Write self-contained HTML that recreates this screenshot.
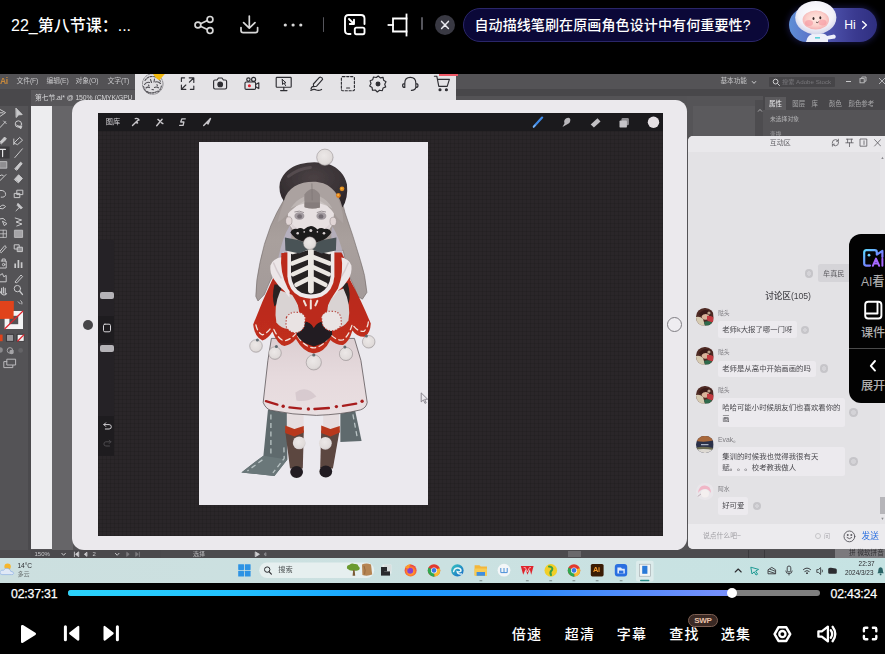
<!DOCTYPE html>
<html lang="zh-CN">
<head>
<meta charset="utf-8">
<title>22_第八节课</title>
<style>
*{box-sizing:border-box;margin:0;padding:0}
html,body{width:885px;height:654px;overflow:hidden;background:#000}
body{font-family:"Liberation Sans","Noto Sans CJK SC",sans-serif;color:#fff;position:relative}
.abs{position:absolute}
#top{position:absolute;left:0;top:0;width:885px;height:74px;background:#000}
#title{position:absolute;left:11px;top:13px;font-size:17px;line-height:24px;white-space:nowrap;color:#fff}
#video{position:absolute;left:0;top:74px;width:885px;height:509px;background:#535353;overflow:hidden}
#bottom{position:absolute;left:0;top:583px;width:885px;height:71px;background:#000}

#title{left:11px;top:14px;font-size:16px;line-height:24px;letter-spacing:0}
.ico{position:absolute;overflow:visible}
.sep{position:absolute;width:1.4px;background:#55555c;border-radius:1px}
#closebtn{position:absolute;left:435px;top:15.3px;width:20px;height:20px;border-radius:50%;background:#393943}
#qpill{position:absolute;left:463px;top:8px;width:306px;height:34px;border-radius:17px;background:#0b0838;border:1px solid #2a2668;color:#fff;font-size:14px;line-height:32px;padding-left:10.400px;white-space:nowrap;letter-spacing:.12px}
#hipill{position:absolute;left:789px;top:8px;width:88px;height:34px;border-radius:17px;background:linear-gradient(90deg,#5f8fd6 0%,#5a72c8 25%,#4b4fa8 50%,#3a3a90 75%,#2f2f80 100%);box-shadow:0 0 6px 1px rgba(40,40,120,.55)}
#hitxt{position:absolute;left:844.300px;top:14.400px;font-size:12.200px;line-height:22px;color:#fff;white-space:nowrap}

#title,#qpill{font-weight:500}
#video{background:#545356}
#vp{position:absolute;left:0;top:-74px;width:885px;height:654px}
#vp div,#vp svg,#vp span{position:absolute}
.r{position:absolute}
.t{white-space:nowrap;line-height:1;font-weight:400}
#aimenu{left:0;top:74px;width:885px;height:15px;background:#535255}
#aitab{left:0;top:89px;width:456px;height:17px;background:#49484b}
#aidoc{left:31px;top:89.600px;width:104px;height:16px;background:#58575a}
#wtb{left:135px;top:74px;width:321px;height:26px;background:#e4e3e6}
#toolp{left:0;top:105.500px;width:30.600px;height:444.500px;background:#545356}
#lstrip{left:30.800px;top:105.500px;width:21.200px;height:443.500px;background:#ededef}
#gstrip{left:52px;top:105.500px;width:21px;height:444.500px;background:#666568}
#ipad{left:72px;top:99.600px;width:615.400px;height:450px;background:#ebe9ed;border-radius:13px 11.500px 11.500px 12px}
#scr{left:98.100px;top:113px;width:564.700px;height:422.600px;background:#2a2629;overflow:hidden}
#scrgrid{left:0;top:18px;width:565px;height:405px;background-image:linear-gradient(rgba(0,0,0,.09) 1px,transparent 1px),linear-gradient(90deg,rgba(0,0,0,.09) 1px,transparent 1px);background-size:4px 4px}
#pctop{left:0;top:0;width:565px;height:18px;background:#1b1a1d}
#canvas{left:198.600px;top:141.600px;width:229.600px;height:363.400px;background:#ebe9ee}
#status{left:0;top:549.500px;width:885px;height:8.500px;background:#4c4b4e}
#taskbar{left:0;top:558px;width:885px;height:25px;background:linear-gradient(90deg,#ccdfdf 0%,#cbe1e1 50%,#c6e3e3 100%)}
#chat{left:688.400px;top:136px;width:200px;height:412.500px;background:#e3e2e5;border-radius:5px 0 0 5px;overflow:hidden}

#bottom div,#bottom svg{position:absolute}
.tm{font-size:12.300px;line-height:14px;color:#fff;white-space:nowrap;letter-spacing:-0.2px;-webkit-text-stroke:.25px #fff}
#pbar{left:67.800px;top:7.200px;width:752.400px;height:5.800px;border-radius:3px;background:#7f7f7f}
#pfill{left:67.800px;top:7.200px;width:666px;height:5.800px;border-radius:3px;background:linear-gradient(90deg,#2bd3fb 0%,#22c2ff 25%,#189dff 50%,#2d8cfb 70%,#5c8cfb 88%,#7a90fb 100%)}
#pknob{left:726.800px;top:5px;width:10.400px;height:10.400px;border-radius:50%;background:#fff}
.cl{font-size:14px;line-height:20px;color:#fff;white-space:nowrap;font-weight:500;top:40.900px;letter-spacing:1.400px;margin-left:-.3px}
#swp{left:687.700px;top:30.900px;width:30.600px;height:13px;border-radius:6.500px;background:#3a2924;border:1px solid #7d5f52;color:#e9c3ab;font-size:8px;line-height:11px;text-align:center;font-weight:700;letter-spacing:-.3px}
#float{position:absolute;left:848.800px;top:233.500px;width:40px;height:169px;background:#020202;border-radius:12px 0 0 12px}
#float div,#float svg{position:absolute}
.fl{font-size:12.200px;line-height:16px;color:#adadad;white-space:nowrap;left:12.200px;font-weight:500;letter-spacing:-.1px}

.mt{font-size:6.800px;color:#c6c6c8;top:77.500px;letter-spacing:-.1px}
.bl{filter:blur(.35px)}
.pt{font-size:6.400px;color:#c4c4c6}

.st{font-size:6px;color:#c9c9cb;top:551px}
.tk{top:563.800px;width:13px;height:13px}
#chat div,#chat svg{position:absolute}
.cn{font-size:5.800px;color:#7d7c80;left:29.600px}
.cb{left:30px;background:#eceaee;border-radius:2.500px}
.cx{font-size:7.400px;line-height:11.200px;color:#4b4a4f;left:33.800px;white-space:nowrap;letter-spacing:0;text-spacing-trim:space-all}
.ci{width:8.400px;height:8.400px;border-radius:50%;background:radial-gradient(circle,#d4d3d7 0 35%,#c6c5c9 36% 100%)}
.av{left:7.800px;width:17.400px;height:17.400px;border-radius:50%;overflow:hidden}
/*SECTION-CSS*/
</style>
</head>
<body>
<div id="top">
  <div id="title">22_第八节课：...</div>
  
  <svg class="ico" style="left:193px;top:14px" width="22" height="22" viewBox="0 0 22 22" fill="none" stroke="#d8d8d8" stroke-width="1.7">
    <circle cx="4.9" cy="11" r="2.9"/><circle cx="17" cy="5.4" r="2.9"/><circle cx="17" cy="16.6" r="2.9"/>
    <path d="M7.5 9.8 L14.4 6.6 M7.5 12.2 L14.4 15.4"/>
  </svg>
  <svg class="ico" style="left:238px;top:13px" width="22" height="22" viewBox="0 0 22 22" fill="none" stroke="#d8d8d8" stroke-width="1.7" stroke-linecap="round" stroke-linejoin="round">
    <path d="M11.3 3 V15 M5.6 9.6 L11.3 15.2 L17 9.6"/>
    <path d="M3 14.5 V17.5 Q3 19.6 5.2 19.6 H17.4 Q19.6 19.6 19.6 17.5 V14.5"/>
  </svg>
  <svg class="ico" style="left:282px;top:20px" width="22" height="10" viewBox="0 0 22 10" fill="#d8d8d8">
    <circle cx="3.3" cy="5" r="1.6"/><circle cx="11.1" cy="5" r="1.6"/><circle cx="18.8" cy="5" r="1.6"/>
  </svg>
  <div class="sep" style="left:323px;top:17px;height:15px"></div>
  <svg class="ico" style="left:343px;top:13px" width="24" height="24" viewBox="0 0 24 24" fill="none" stroke="#fff" stroke-width="1.9" stroke-linecap="round" stroke-linejoin="round">
    <path d="M7.5 21 H5.5 Q2 21 2 17.5 V5.5 Q2 2 5.500 2 H18 Q21.5 2 21.5 5.500 V11"/>
    <rect x="11.8" y="14.6" width="9.7" height="6.6" rx="1.6"/>
    <path d="M6 6 L11 11 M11 6.800 V11 H6.800"/>
  </svg>
  <svg class="ico" style="left:386px;top:12px" width="24" height="26" viewBox="0 0 24 26" fill="none" stroke="#fff" stroke-width="1.8" stroke-linecap="square">
    <path d="M20.500 2.500 V23.500"/>
    <path d="M20.500 6.500 H7 V19.500 H20.500"/>
    <path d="M2.500 13 H7"/>
  </svg>
  <div class="sep" style="left:421.3px;top:16.5px;height:13.5px"></div>
  <div id="closebtn"><svg width="20" height="20" viewBox="0 0 20 20" fill="none" stroke="#e8e8ee" stroke-width="1.5" stroke-linecap="round"><path d="M6.600 6.400 L13.400 13.400 M13.400 6.400 L6.600 13.400"/></svg></div>
  <div id="qpill">自动描线笔刷在原画角色设计中有何重要性?</div>
  <div id="hipill"></div>
  <svg class="ico" style="left:786px;top:0" width="60" height="44" viewBox="0 0 60 44">
    <defs>
      <radialGradient id="hg" cx="50%" cy="40%" r="60%"><stop offset="0" stop-color="#ffffff"/><stop offset="0.7" stop-color="#f2f1f8"/><stop offset="1" stop-color="#d4d6ea"/></radialGradient>
      <radialGradient id="fg" cx="50%" cy="45%" r="60%"><stop offset="0" stop-color="#ffe9e2"/><stop offset="0.6" stop-color="#fbd0cb"/><stop offset="1" stop-color="#f3a9ad"/></radialGradient>
      <clipPath id="hc"><rect x="3" y="0" width="57" height="42" rx="17"/></clipPath>
    </defs>
    <g clip-path="url(#hc)">
      <path d="M20 42 Q21 34 30 33 Q40 33 41 36 L48 34.500 Q51 36 49 38.500 L42 39.500 L42 42 Z" fill="#eef0fa"/>
      <rect x="29" y="37" width="5" height="1.600" fill="#5fd0d8"/>
      <ellipse cx="29.800" cy="17.600" rx="20.600" ry="16.600" fill="url(#hg)"/>
      <ellipse cx="29.800" cy="20" rx="13.200" ry="9.400" fill="url(#fg)"/>
      <ellipse cx="23" cy="23" rx="4" ry="3" fill="#f58f9a" opacity=".55"/>
      <ellipse cx="36.500" cy="22.500" rx="4" ry="3" fill="#f58f9a" opacity=".55"/>
      <ellipse cx="27.500" cy="18.400" rx="1" ry="1.500" fill="#3a2a2a"/>
      <ellipse cx="34.300" cy="17.800" rx="1" ry="1.500" fill="#3a2a2a"/>
      <path d="M30 22 Q31.200 23.500 32.600 21.800" stroke="#3a2a2a" stroke-width=".8" fill="none"/>
    </g>
  </svg>
  <div id="hitxt">Hi</div>
  <svg class="ico" style="left:859px;top:18px" width="10" height="14" viewBox="0 0 10 14" fill="none" stroke="#fff" stroke-width="1.400" stroke-linecap="round" stroke-linejoin="round"><path d="M3.600 3.600 L7.400 7.100 L3.600 10.600"/></svg>
<!--TOP-ICONS-->
</div>
<div id="video">
  
<div id="vp">
  <div id="aimenu"></div>
  <div id="aitab"></div>
  <div id="aidoc"></div>
  
  <div class="t bl" style="left:0;top:77px;font-size:8.500px;font-weight:700;color:#c98a3c;letter-spacing:-.5px">Ai</div>
  <div class="t mt bl" style="left:16.500px">文件(F)</div>
  <div class="t mt bl" style="left:46.500px">编辑(E)</div>
  <div class="t mt bl" style="left:75.500px">对象(O)</div>
  <div class="t mt bl" style="left:107.500px">文字(T)</div>
  <div class="t bl" style="left:35px;top:94.600px;font-size:6.800px;color:#d6d6d8;letter-spacing:-.05px">第七节.ai* @ 150% (CMYK/GPU</div>
  <div style="left:456px;top:74px;width:429px;height:15.300px;background:#545356"></div>
  <div style="left:456px;top:89.300px;width:429px;height:7px;background:#48474a"></div>
  <div class="t bl" style="left:720.500px;top:77.800px;font-size:6.600px;color:#c4c4c6">基本功能</div>
  <svg class="bl" style="left:750.500px;top:79.500px" width="6" height="5" viewBox="0 0 6 5" fill="none" stroke="#cfcfd1" stroke-width="1"><path d="M1 1.200 L3 3.400 L5 1.200"/></svg>
  <div style="left:769px;top:76.500px;width:65.500px;height:10.500px;background:#464548;border-radius:1px"></div>
  <svg class="bl" style="left:771.500px;top:77.500px" width="9" height="9" viewBox="0 0 9 9" fill="none" stroke="#d0d0d2" stroke-width="1"><circle cx="3.600" cy="3.600" r="2.400"/><path d="M5.400 5.400 L7.800 7.800"/></svg>
  <div class="t bl" style="left:782px;top:78.500px;font-size:6.200px;color:#77767a">搜索 Adobe Stock</div>
  <div style="left:845.500px;top:81px;width:5.500px;height:1px;background:#c8c8ca"></div>
  <svg class="bl" style="left:859px;top:76px" width="8" height="8" viewBox="0 0 8 8" fill="none" stroke="#c0c0c2" stroke-width=".9"><rect x="1" y="2.600" width="4.200" height="4.200"/><path d="M2.800 2.600 V1 H7 V5.200 H5.200"/></svg>
  <svg class="bl" style="left:878px;top:77px" width="8" height="8" viewBox="0 0 8 8" fill="none" stroke="#c0c0c2" stroke-width=".9"><path d="M1 1 L7 7 M7 1 L1 7"/></svg>

  <div id="wtb"></div>
  
  <svg style="left:135px;top:74px" width="321" height="26" viewBox="135 74 321 26" fill="none" stroke="#2e2e33" stroke-width="1.150" stroke-linecap="round" stroke-linejoin="round" class="bl">
    <circle cx="152.700" cy="84" r="10.300" fill="#dedde0" stroke="#77767b" stroke-width=".8" stroke-dasharray="2.400 1.200"/>
    <g stroke="#4f4e53" stroke-width="1.100" fill="none">
      <path d="M145 80.500 Q148 76 153 76.500 Q158.500 77 160.500 81.500" stroke-dasharray="2 1.300"/>
      <path d="M144.500 84.500 Q146.500 81.500 149.500 82.500 M155.500 82 Q158 81 160.500 83.500" />
      <path d="M146 88 Q147.500 86.600 149.500 87.600 M154.500 87.400 Q156.500 86.400 158.500 87.800"/>
      <path d="M147 91.500 Q152 94.500 158 91" stroke-dasharray="1.600 1.200"/>
      <path d="M150.500 79.500 L151.500 82.500 M154.500 79 L154 82 M152 89.500 L153.500 89.800 M148.500 85 L149 86 M157 84.600 L157.400 85.800"/>
      <path d="M143.600 86.500 Q144.600 91 148.600 93" stroke-dasharray="1.400 1.400"/>
      <path d="M161.400 86 Q160.400 90.500 157 92.600" stroke-dasharray="1.400 1.400"/>
    </g>
    <path d="M153 74 H164.800 L159.400 80.200 Q155.500 78.400 153 74 Z" fill="#f2b90f" stroke="none"/>
    <path d="M189.200 77.800 H193.800 V82.400 M193.600 78 L189.400 82.200 M185.800 89.400 H181.400 V85 M181.600 89.200 L185.800 85 M181.400 81.400 V77.800 H184.600 M193.800 86 V89.400 H190.400"/>
    <path d="M213.600 81.400 Q213.600 80 215 80 H217 L218.400 78 H222 L223.400 80 H225.200 Q226.600 80 226.600 81.400 V87.600 Q226.600 89 225.200 89 H215 Q213.600 89 213.600 87.600 Z"/>
    <circle cx="220.200" cy="84.400" r="2.300" fill="#2e2e33"/>
    <circle cx="248.400" cy="79.600" r="1.700"/><circle cx="253.600" cy="79.400" r="2"/>
    <rect x="245" y="82" width="10.600" height="7.400" rx="1.200"/><path d="M255.600 84.600 L258.800 82.800 V88.600 L255.600 86.800"/>
    <circle cx="249.400" cy="85.700" r="1.500" fill="#e2202e" stroke="none"/>
    <rect x="276.200" y="77.400" width="15" height="9.800" rx=".8"/><path d="M280.600 90.600 H287 M283.800 87.400 V90.400"/>
    <path d="M282.200 79.400 L282.600 84.600 L284 83.200 L285.600 85.600 M282.200 79.400 L286 82.800 L284 83.200" stroke-width="1"/>
    <path d="M320.800 77.200 Q322.600 77.600 322.600 79.400 L316.600 86.200 L313.600 86.600 L313.400 84 L319.400 77.400 Q320 77 320.800 77.200 Z M311 89 Q311.600 86.400 313.600 86.400 M310.800 90.400 Q314 88.600 316.400 90 Q318.600 91 321.600 89.400"/>
    <rect x="341.400" y="76.600" width="13" height="14.200" rx="1.400" stroke-dasharray="2.200 1.700"/><path d="M346.600 88 H349.600"/>
    <path d="M378.200 76 L380.300 77.900 L383.100 77.400 L383.600 80.200 L386 81.700 L384.700 84.200 L385.700 86.900 L383.100 88 L382.300 90.700 L379.500 90.200 L377.300 92 L375.300 90 L372.500 90.300 L372.100 87.500 L369.700 86 L371 83.500 L370.100 80.800 L372.700 79.700 L373.500 77 L376.300 77.500 Z"/>
    <circle cx="378" cy="84" r="1.900" fill="#2e2e33"/>
    <path d="M404.800 86 V83 Q404.800 77.400 410.300 77.400 Q415.800 77.400 415.800 83 V86 M404.800 83.600 Q402.600 83.600 402.600 85.400 Q402.600 87.400 404.800 87.400 Z M415.800 83.600 Q418 83.600 418 85.400 Q418 87.400 415.800 87.400 Z M415.800 87.400 Q415.400 90.200 411.400 90.400"/>
    <path d="M434.400 76.200 H436.800 L438.800 86.400 H447.200 L449.400 79.400 H437.600"/><circle cx="440" cy="89.700" r="1" fill="#2e2e33"/><circle cx="446.400" cy="89.700" r="1" fill="#2e2e33"/>
  </svg>

  <div style="left:438.800px;top:74px;width:19.500px;height:1.600px;background:#ee5866"></div>
  <div id="toolp"></div>
  
  <svg class="bl" style="left:0;top:100px" width="31" height="280" viewBox="0 100 31 280" fill="none" stroke="#c9c9cb" stroke-width="1" stroke-linecap="round" stroke-linejoin="round">
    <path d="M0 109.500 L5.600 112.600 L0 116.400 M0 112.800 H3" />
    <path d="M16.200 108.400 L22.200 114.600 L18.800 114.800 L16.400 117.200 Z" fill="#c9c9cb"/>
    <path d="M0 127.600 L5.600 121.600 M3.600 121 L6.200 123.600"/>
    <circle cx="18.400" cy="124" r="3.200"/><path d="M16.600 125 L20.800 128.800 L21.800 126.200" fill="#c9c9cb"/>
    <path d="M0 142 L4.600 137 L6.400 139 L1.600 143.600 Z" fill="#c9c9cb"/>
    <path d="M14.200 142.800 L19.600 137.400 L22.600 140.200 L17.800 144.400 Z M13.800 139 V144.600" />
    <rect x="0" y="146.500" width="9.600" height="12" fill="#3b3a3d" stroke="none"/>
    <path d="M0 149.400 H5.400 M2.600 149.400 V156.600" stroke="#e4e4e6" stroke-width="1.200"/>
    <path d="M14.800 157.600 L22.400 148.800"/>
    <rect x="0" y="161.600" width="6.800" height="6.600" fill="#8f8e91" stroke="#c9c9cb" stroke-width=".8"/>
    <path d="M15 168.600 L20.600 162.200 L22.200 163.600 L17 170 Z" fill="#c9c9cb"/>
    <path d="M0 180.600 L6 174.600 M0 175.600 Q2 174 3.400 175.600"/>
    <path d="M14.600 179.200 L18.600 174.800 L22.400 178.400 L18.600 182.600 Z" fill="#c9c9cb"/>
    <path d="M0 190.400 Q5.400 190 5.600 194.400 Q5.400 197.600 1.200 197.200"/>
    <rect x="14.600" y="193.400" width="5.200" height="4.200"/><rect x="17.200" y="190.200" width="5.600" height="4.400"/>
    <path d="M0 206.800 Q3 203.400 5.600 206.600 Q3 210 0 208.600"/>
    <path d="M16 210.800 L19.600 207.200 M18.200 203.600 L22.400 207.800 L20.600 208.800 L17.400 205.600 Z" fill="#c9c9cb"/>
    <path d="M0 218.800 Q3.400 217 5.400 220.200 M2.800 221.400 L7 223.600 L4.600 225.400 Z"/>
    <path d="M15.200 218 L21.600 220 L16 222 L22 224 L16.800 226"/>
    <path d="M0 230.200 H6.400 V237.400 H0 M3.200 230.200 V237.400 M0 233.800 H6.400" stroke-width=".8"/>
    <rect x="14.800" y="230.200" width="7.800" height="7.200" fill="#a5a4a7" stroke="#c9c9cb" stroke-width=".8"/>
    <path d="M0 251.200 L4.800 245.600 L6.400 247 L1.600 252.400 Z" />
    <rect x="14.600" y="244.800" width="4.600" height="4.200"/><rect x="17.600" y="247.200" width="4.800" height="4.400" fill="#8f8e91"/>
    <path d="M1.200 261 H6.200 V268 H0 M2.200 261 V259 H5.200 V261"/><circle cx="3.600" cy="264.600" r="1.200"/>
    <path d="M15.200 268 V263.400 M18.400 268 V260 M21.600 268 V262.200" stroke-width="1.700" stroke-linecap="butt"/>
    <path d="M0 275.200 L2.400 273.600 L3.800 276.800 L6.200 275.400 V281.800 H0"/>
    <path d="M15.200 281.800 L21 275 L22.600 276.600 L17 282.600 Z"/>
    <path d="M1.600 293.600 V288.200 M3.400 293 V287.200 M5.200 293.400 V288.400 M0 291.400 Q3 297.200 6.600 293.600" stroke-width="1.100"/>
    <circle cx="17.400" cy="288.600" r="3.200"/><path d="M19.800 291.200 L22.400 294.400" stroke-width="1.400"/>
    <rect x="0" y="301" width="13.600" height="17.800" fill="#e0431b" stroke="none"/>
    <path d="M18.200 301.800 L20.200 303.800 M20.600 300.600 Q22.800 301.600 22 304" stroke-width=".9"/>
    <rect x="4.600" y="311" width="18.400" height="18" fill="#f3f3f4" stroke="none"/>
    <rect x="9.400" y="315.800" width="8.800" height="8.400" fill="#545356" stroke="none"/>
    <rect x="0" y="301" width="13.600" height="17.800" fill="#e0431b" stroke="none"/>
    <path d="M4.800 328.800 L22.800 311.200" stroke="#e0232d" stroke-width="1.200"/>
    <rect x="0" y="334.600" width="2.600" height="6.600" fill="#e0431b" stroke="none"/>
    <rect x="6.800" y="334.400" width="6.800" height="7" fill="#9a999c" stroke="#2d2c2f" stroke-width=".8"/>
    <rect x="17.400" y="334.400" width="6.800" height="7" fill="#f3f3f4" stroke="#2d2c2f" stroke-width=".8"/>
    <path d="M17.800 341 L23.800 334.800" stroke="#e0232d" stroke-width="1.200"/>
    <circle cx="0" cy="350" r="2.800" fill="#8b8a8d" stroke="none"/>
    <circle cx="10" cy="350.400" r="2.800" stroke="#a5a4a7"/><circle cx="11.600" cy="352" r="2.200" fill="#a5a4a7" stroke="none"/>
    <circle cx="20.600" cy="350.400" r="2.400" fill="#646366" stroke="none"/>
    <rect x="4.200" y="361.600" width="8.600" height="6" stroke="#b9b8bb"/><rect x="7.200" y="359.200" width="8.400" height="5.800" stroke="#b9b8bb" fill="#545356"/>
  </svg>

  <div style="left:28.400px;top:105.500px;width:2.400px;height:444px;background:#4b4a4d"></div>
  <div id="lstrip"></div>
  <div id="gstrip"></div>
  
  <div style="left:687.400px;top:96.300px;width:198px;height:40px;background:#555457"></div>
  <div style="left:693px;top:105.500px;width:62px;height:31px;background:#5b5a5d"></div>
  <div style="left:755.200px;top:100px;width:8px;height:37px;background:#4d4c4f"></div>
  <svg class="bl" style="left:756.500px;top:107.500px" width="6" height="5" viewBox="0 0 6 5" fill="none" stroke="#b0b0b2" stroke-width=".9"><path d="M1 3.600 L3 1.400 L5 3.600"/></svg>
  <div style="left:763.400px;top:96.300px;width:122px;height:14px;background:#48474a"></div>
  <div style="left:765px;top:96.800px;width:20.500px;height:13.500px;background:#5b5a5d"></div>
  <div class="t pt bl" style="left:769px;top:100.500px;color:#f0f0f2">属性</div>
  <div class="t pt bl" style="left:792.300px;top:100.500px;color:#a9a9ab">图层</div>
  <div class="t pt bl" style="left:811.500px;top:100.500px;color:#a9a9ab">库</div>
  <div class="t pt bl" style="left:829px;top:100.500px;color:#a9a9ab">颜色</div>
  <div class="t pt bl" style="left:848.500px;top:100.500px;color:#a9a9ab">颜色参考</div>
  <div class="t bl" style="left:770px;top:117px;font-size:5.800px;color:#b4b4b6">未选择对象</div>
  <div class="t bl" style="left:770px;top:131.500px;font-size:5.800px;color:#a4a4a6">变换</div>

  <div id="ipad"></div>
  <div id="scr"><div id="pctop"></div><div id="scrgrid"></div>
    <div class="t bl" style="left:7.600px;top:5.400px;font-size:7.200px;color:#d6d4d8">图库</div>
    <svg class="bl" style="left:0;top:0" width="565" height="18" viewBox="98.100 113 565 18" fill="none" stroke="#c8c6ca" stroke-width="1.400" stroke-linecap="round" stroke-linejoin="round">
      <path d="M132.600 125.600 L136.400 121.800 M135.400 118.600 Q138 117.800 139.200 120 L137.400 120.400 L137 122.200 Q138.600 123.600 136.200 122.600" />
      <path d="M156.800 125.800 L162.200 119.200 M158 119.400 L159.600 120.800 M161.400 122.600 L163 123.600" />
      <path d="M185.400 118.800 H182 L180.800 122 H184 L183.200 125.400 H179.800" stroke-width="1.300"/>
      <path d="M203.800 125.600 L210.600 118.400 L208.200 124 L206.800 122.600 Z" fill="#c8c6ca"/>
      <path d="M534 126.600 L542.200 117.600" stroke="#3f8be8" stroke-width="2.200"/>
      <path d="M533.600 127 L535.200 125.200" stroke="#7db2f0" stroke-width="1.400"/>
      <path d="M562.600 127 L564.600 123.200 Q563.400 120.200 566.400 118.200 Q569.400 117 570.400 119.200 Q570.800 122.600 567.800 124 Z" fill="#b9b7bb" stroke="none"/>
      <path d="M590.800 124.400 L597.600 118.200 L600.600 121.400 L594 127.400 Z" fill="#c2c0c4" stroke="none"/>
      <rect x="621.600" y="118" width="7.400" height="7.200" rx="1.200" fill="#8f8d91" stroke="none"/>
      <rect x="619.600" y="120.400" width="7.400" height="7.200" rx="1.200" fill="#c6c4c8" stroke="none"/>
      <circle cx="653.600" cy="122.200" r="5.700" fill="#e5e0e4" stroke="none"/>
    </svg>
    <div style="left:0;top:127px;width:16.400px;height:215.500px;background:#252226;border-radius:0 2px 2px 0"></div>
    <div style="left:0;top:203px;width:16.400px;height:27px;background:#1e1c1f"></div>
    <div style="left:0;top:303px;width:16.400px;height:39.500px;background:#1e1c1f"></div>
    <div style="left:1.500px;top:179px;width:14.500px;height:7.200px;border-radius:2px;background:#b5b3b7"></div>
    <div style="left:1.500px;top:232.300px;width:14.500px;height:7.200px;border-radius:2px;background:#b5b3b7"></div>
    <svg class="bl" style="left:0;top:205px" width="18" height="140" viewBox="98.100 318 18 140" fill="none" stroke="#d4d2d6" stroke-width="1" stroke-linecap="round" stroke-linejoin="round">
      <rect x="103.600" y="324.200" width="7" height="7.600" rx="1.400"/>
      <path d="M104 424.600 H109.200 Q111.400 424.600 111.400 426.800 Q111.400 429 109.200 429 H105.400 M105.800 422.800 L104 424.600 L105.800 426.400"/>
      <path d="M111 441.800 H106 Q104 441.800 104 444 Q104 446 106 446 H109.600 M109.400 440.200 L111 441.800 L109.400 443.400" stroke="#4c4a4e"/>
    </svg>
</div>
  <div id="canvas"></div>
  
<svg id="art" style="left:198.600px;top:141.600px" width="229.600" height="363.400" viewBox="198.600 141.600 229.600 363.400">
  <defs>
    <filter id="sf" x="-5%" y="-5%" width="110%" height="110%"><feGaussianBlur stdDeviation="0.45"/></filter>
    <radialGradient id="pomg" cx="45%" cy="40%" r="65%"><stop offset="0" stop-color="#ece8e7"/><stop offset=".75" stop-color="#e0dbda"/><stop offset="1" stop-color="#c2bcbc"/></radialGradient>
    <radialGradient id="hatg" cx="50%" cy="35%" r="70%"><stop offset="0" stop-color="#4a4144"/><stop offset=".6" stop-color="#3a3336"/><stop offset="1" stop-color="#2c2629"/></radialGradient>
    <linearGradient id="hairg" x1="0" y1="0" x2="0" y2="1"><stop offset="0" stop-color="#9a908e"/><stop offset=".5" stop-color="#a9a09d"/><stop offset="1" stop-color="#a39a99"/></linearGradient>
    <linearGradient id="skirtg" x1="0" y1="0" x2="0" y2="1"><stop offset="0" stop-color="#dccfd2"/><stop offset=".5" stop-color="#e6dadd"/><stop offset="1" stop-color="#e9dfe1"/></linearGradient>
    <linearGradient id="capeg" x1="0" y1="0" x2="0" y2="1"><stop offset="0" stop-color="#b3281a"/><stop offset="1" stop-color="#c22e1c"/></linearGradient>
  </defs>
  <g filter="url(#sf)">
    <!-- scarf -->
    <path d="M267.600 409 L286.600 412 L287 459 L274 475.500 L241 472 L255.700 460.500 L263 455.400 Z" fill="#5e6a6d"/>
    <path d="M263 455.400 L287 459 L274 475.500 L241 472 Z" fill="#6a7779"/>
    <path d="M340 412 L354.700 410 L361.200 440.700 L340 441.600 Z" fill="#5e6a6d"/>
    <path d="M270.500 414 V456" stroke="#b9c3c4" stroke-width="1.300" stroke-dasharray="5 3.500" fill="none"/>
    <path d="M283.500 447 L283.800 458 L272.500 472.500" stroke="#b9c3c4" stroke-width="1.300" stroke-dasharray="5 3.500" fill="none"/>
    <path d="M262 459.500 L247 470.500" stroke="#b9c3c4" stroke-width="1.300" stroke-dasharray="5 3.500" fill="none"/>
    <path d="M352.500 414 L357.200 439" stroke="#b9c3c4" stroke-width="1.300" stroke-dasharray="5 3.500" fill="none"/>
    <!-- legs -->
    <rect x="286.400" y="411" width="16.800" height="17" fill="#e6dddf"/>
    <rect x="322.800" y="411" width="15.800" height="17" fill="#e6dddf"/>
    <path d="M284.800 430 L303.400 430 L302.400 468 L289.600 468 Z" fill="#5c4641"/>
    <path d="M320.800 430 L339.200 430 L332.500 468 L319.800 468 Z" fill="#5c4641"/>
    <path d="M284.800 425 L294 428.500 L303.400 425.500 L303.400 432 L294 436 L284.800 432.500 Z" fill="#b8391d"/>
    <path d="M320.800 425 L330 428.500 L339.400 425.500 L339.400 432 L330 436 L320.800 432.500 Z" fill="#b8391d"/>
    <ellipse cx="296.200" cy="471.600" rx="6.400" ry="6" fill="#231f21"/>
    <ellipse cx="325.400" cy="471.200" rx="6.400" ry="6" fill="#231f21"/>
    <circle cx="298.800" cy="442.500" r="6.400" fill="url(#pomg)"/>
    <circle cx="325" cy="442.900" r="6.400" fill="url(#pomg)"/>
    <!-- hair back -->
    <path d="M313 180 C299 180 287 186 283.500 199.500 Q276 212 270.500 225 Q263 244 259.600 262 Q255.500 280 255.400 296 L257.600 300.600 L264 294 Q269 280 277 268 L282 250 L342.700 250 L348 274 Q354 286 357.400 296 L362 298.800 L366.500 292 Q365 274 360 260 Q353 236 344.500 212 C340 190 327 180 313 180 Z" fill="url(#hairg)" stroke="#6f6765" stroke-width=".6"/>
    <path d="M289.500 225 Q281 238 277 263 L291 263 L291 232 Z" fill="#b7b1c2" opacity=".9"/>
    <path d="M332 226 Q340 238 345 263 L331 263 L331 232 Z" fill="#b7b1c2" opacity=".8"/>
    <!-- skirt -->
    <path d="M271 338 L267.500 360 L262.800 402 Q265 408 270 409.800 Q292 414.500 316 415 Q342 414 360 409.500 Q366 407.500 366.800 402 L360.500 360 L354 338 Z" fill="url(#skirtg)" stroke="#4b4346" stroke-width=".7"/>
    <path d="M295 392 Q306 384 316 396 Q306 402 296 400 Z" fill="#d3c6ca" opacity=".8"/>
    <g stroke="#a81e1e" stroke-width="2.300" stroke-linecap="round" fill="none">
      <path d="M265.500 400.800 L277 404.300"/><path d="M289 407 L300.500 408.200"/><path d="M314 408.600 L328.500 407.600"/><path d="M342.500 405.500 L355.800 403.200"/>
    </g>
    <g fill="#a81e1e"><circle cx="282.800" cy="405.800" r="1.700"/><circle cx="308" cy="408.600" r="1.700"/><circle cx="336" cy="406.200" r="1.700"/><circle cx="361.700" cy="400.900" r="1.700"/></g>
    <!-- cape -->
    <path d="M284 252 Q276 262 272.500 278 Q262 300 252.800 324 Q254 336 262 340 Q268 338 272 331 Q277 344 284 345.600 Q291 344 295.500 338.500 Q303 352 313.400 353 Q324 352 330 339.500 Q336 345 342.700 344.600 Q349 341 352 330 Q357 337 364.700 336.400 Q370 332 370.400 323 Q360 298 350 280 Q347 262 341 252 Z" fill="url(#capeg)"/>
    <!-- dark under-cape shadows -->
    <path d="M274 284 Q271 296 274 306 L280 300 L281 284 Z" fill="#2a2224"/>
    <path d="M347 282 Q351 294 348 304 L343 298 L342 284 Z" fill="#2a2224"/>
    <!-- sleeves -->
    <path d="M280 290 Q273 306 276 322 Q282 330 292 328 L300 318 L296 296 Z" fill="#d9d3d3"/>
    <path d="M343 288 Q351 304 348 320 Q342 329 333 327 L326 317 L329 294 Z" fill="#d9d3d3"/>
    <!-- frill shoulders -->
    <path d="M282 256.500 Q272 258 270 265 Q269 273 274 279.500 Q278 286 283.500 290 L289 297 L290 280 Q282 270 282 256.500 Z" fill="#ece6e8"/>
    <path d="M339 256.500 Q349 258 351 265 Q352 273 347.500 279.500 Q343.500 286 338 290 L332.500 297 L331.500 280 Q339 270 339 256.500 Z" fill="#ece6e8"/>
    <path d="M273 262 Q276 270 281 278" stroke="#cfc4c8" stroke-width="1.400" fill="none" opacity=".8"/>
    <path d="M348 262 Q345 270 340 278" stroke="#cfc4c8" stroke-width="1.400" fill="none" opacity=".8"/>
    <!-- bib -->
    <path d="M281 252.500 Q279 272 287.500 288 Q296 300 300 310 L313.400 327 L325 310 Q330 298 337.500 288 Q344 272 340.500 252.500 Z" fill="#bb2b1a"/>
    <!-- cape scallop dashes -->
    <g stroke="#f0e2dc" stroke-width="1.300" stroke-linecap="round" fill="none" stroke-dasharray="5 3.600">
      <path d="M255.500 324.500 Q257 332 262 334.500 Q267 333 271.500 326"/>
      <path d="M273.500 329 Q278 339 284 340.500 Q291 339 295.500 333"/>
      <path d="M297.500 336 Q304 346.500 313.400 347.500 Q323 346.500 328.500 336"/>
      <path d="M331 335 Q337 340.500 342.500 339.500 Q348 336 351.500 325"/>
      <path d="M353.500 326 Q358 331.500 363.500 331 Q367.500 327.500 368 321"/>
    </g>
    <!-- ribcage -->
    <path d="M287 245 L287 276 Q288 290 299.500 296.200 Q310.400 300.400 321.500 296.200 Q333 290 334 276 L334 245 Z" fill="#eee9ea"/>
    <path d="M290.600 245 L290.600 275 Q291.600 287 301 292.400 Q310.400 295.800 320 292.400 Q329.400 287 330.400 275 L330.400 245 Z" fill="#262124"/>
    <g stroke="#ebe7e2" stroke-width="4.500" stroke-linecap="round" fill="none">
      <path d="M292 251.600 L308 247.400"/><path d="M329 251.600 L313 247.400"/>
      <path d="M292 263 L308 256.800"/><path d="M329 263 L313 256.800"/>
      <path d="M292.600 273.800 L308 266.800"/><path d="M328.400 273.800 L313 266.800"/>
      <path d="M296 284.400 L308 278.400"/><path d="M325 284.400 L313 278.400"/>
    </g>
    <rect x="307.600" y="245" width="5.800" height="48" rx="2.400" fill="#ebe7e2"/>
    <path d="M303.500 300.500 L305.500 305 M310.400 300 V308 M317 300.500 L315 305" stroke="#f0e2dc" stroke-width="2" stroke-linecap="round"/>
    <!-- hands + heart -->
    <path d="M313.400 346 Q300 342.500 296.300 334 Q295 324 304 321 Q310 321 313.400 327.500 Q317 321 323 321 Q332.500 324 331.800 334 Q327 342.500 313.400 346 Z" fill="#221e20"/>
    <path d="M286 317 Q290 311 296 312 Q302 311 305 317 L304 326 Q300 333 294 332.500 Q287 331 285.500 325 Z" fill="#e9e3e3" stroke="#b03028" stroke-width="1.100" stroke-dasharray="1.200 1.800"/>
    <path d="M321 316 Q325 310 331 311 Q337 310 340.500 316 L341 324 Q338 330.500 331 330.500 Q325 330 322 324 Z" fill="#e9e3e3" stroke="#b03028" stroke-width="1.100" stroke-dasharray="1.200 1.800"/>
    <!-- cape pompoms -->
    <g stroke="#8b8587" stroke-width=".5">
      <circle cx="255.600" cy="345.600" r="6.300" fill="url(#pomg)"/>
      <circle cx="274.600" cy="352.700" r="6.300" fill="url(#pomg)"/>
      <circle cx="313.400" cy="362" r="7.600" fill="url(#pomg)"/>
      <circle cx="345.600" cy="353.600" r="6.600" fill="url(#pomg)"/>
      <circle cx="368.300" cy="341.400" r="6.300" fill="url(#pomg)"/>
    </g>
    <g fill="#5e6a70"><circle cx="257" cy="339.600" r="1.500"/><circle cx="276" cy="346" r="1.500"/><circle cx="313.400" cy="354.600" r="1.600"/><circle cx="344.500" cy="346.600" r="1.500"/><circle cx="366" cy="335.600" r="1.500"/></g>
    <!-- face -->
    <path d="M288.500 204 Q286 216 289.500 225 Q297 237 310.500 239 Q325 237 331.500 225 Q335 214 332.500 204 L312 192 Z" fill="#e7e0e1"/>
    <path d="M290 222 Q300 232 310.500 233 Q322 232 331 222 Q328 236 310.500 239 Q294 236 290 222 Z" fill="#d9cfd3" opacity=".7"/>
    <ellipse cx="288.400" cy="220.600" rx="3.200" ry="4.200" fill="#e1d6d6" stroke="#8a7f7f" stroke-width=".5"/>
    <ellipse cx="332.800" cy="221" rx="3.200" ry="4.200" fill="#e1d6d6" stroke="#8a7f7f" stroke-width=".5"/>
    <ellipse cx="299" cy="215.600" rx="5" ry="3.800" fill="#a39ba0"/>
    <ellipse cx="321" cy="215.600" rx="5" ry="3.800" fill="#a39ba0"/>
    <ellipse cx="299.200" cy="216" rx="2.400" ry="2.200" fill="#756d73"/>
    <ellipse cx="320.600" cy="216" rx="2.400" ry="2.200" fill="#756d73"/>
    <path d="M294 211.600 Q299 209.600 303.600 212.200 M316.400 212.200 Q321 209.600 325.600 211.600" stroke="#7a7176" stroke-width=".7" fill="none"/>
    <!-- hair front -->
    <path d="M313 180.500 C299 180.500 287.500 187 284 200 Q280 210 277 222 Q284 218 289.500 211 Q296 205 304 200.500 L304.200 206.500 Q311 209 319.400 207 L319.600 200.500 Q326 203.500 331 209.500 Q336 217 343 223 Q343 214 341 208 C337 190 327 180.500 313 180.500 Z" fill="#aba2a0"/>
    <path d="M304 196 Q296 199 290 208 Q297 204.500 304 203 Z" fill="#c2bab8" opacity=".8"/>
    <path d="M319.600 196 Q327 199 332 208 Q326 204.500 319.600 203 Z" fill="#c2bab8" opacity=".8"/>
    <path d="M304 194 L304.200 206.800 Q311 209.200 319.400 207.200 L319.600 194 Q312 183 304 194 Z" fill="#8f8685"/>
    <path d="M304.200 202 L304.200 206.800 Q311 209.200 319.400 207.200 L319.400 202 Z" fill="#7f7675" opacity=".6"/>
    <path d="M311.500 183 L311.800 200" stroke="#7d7574" stroke-width="1" opacity=".7"/>
    <!-- hat -->
    <path d="M283.400 200.500 Q277.500 192 279.500 182 Q284 168 300 163.500 Q314 160 328 163.500 Q343 169 346.600 184 Q348 198 342 207 C338 190 327 181.400 313 181.400 C299 181.400 287 187 283.400 200.500 Z" fill="url(#hatg)"/>
    <path d="M288 176 Q298 168 310 167" stroke="#6a6064" stroke-width="3" stroke-linecap="round" opacity=".5" fill="none"/>
    <circle cx="324.500" cy="156.900" r="8.200" fill="url(#pomg)" stroke="#8b8587" stroke-width=".5"/>
    <circle cx="341.600" cy="188.400" r="2.400" fill="#e08a1c"/><circle cx="338" cy="195.100" r="2.400" fill="#e07f1c"/>
    <circle cx="341.300" cy="188" r="1" fill="#f4b640"/><circle cx="337.700" cy="194.700" r="1" fill="#f4b640"/>
    <!-- collar bow -->
    <path d="M284.500 237 L300 240 L310 246 L320 240 L336 237 L335.500 250 L321 253 L310 248 L299 253 L285 250 Z" fill="#4a5357"/>
    <path d="M290 232 Q292 227.500 297 228.500 Q300 226.500 303.500 229 Q307 225.500 310.500 225.500 Q314 225.500 317 229 Q320.500 226.500 324 228.500 Q329 227.500 331 232 Q327 238.500 320 240.500 L310.500 244 L301 240.500 Q294 238.500 290 232 Z" fill="#1f1b1d"/>
    <g fill="#d8d2d2"><circle cx="297.300" cy="232.800" r="1.300"/><circle cx="310.400" cy="230" r="1.500"/><circle cx="323.600" cy="232.800" r="1.300"/><circle cx="303.800" cy="231.500" r=".8"/><circle cx="317" cy="231.500" r=".8"/></g>
    <circle cx="309.400" cy="242.800" r="6.400" fill="url(#pomg)" stroke="#8b8587" stroke-width=".4"/>
  </g>
  <!-- mouse cursor -->
  <path d="M420.800 392.500 L420.800 401.500 L423 399.500 L424.600 403 L425.800 402.400 L424.300 399 L427.200 398.800 Z" fill="#e9e7ec" stroke="#77737c" stroke-width=".8" stroke-linejoin="round"/>
</svg>

  
  <div style="left:83.300px;top:319.800px;width:10.200px;height:10.200px;border-radius:50%;background:#464548"></div>
  <div style="left:666.600px;top:317px;width:15.200px;height:15.200px;border-radius:50%;border:1.200px solid #7f7d83;background:#efedf1"></div>

  <div id="chat">
    <div style="left:0;top:0;width:200px;height:16px;background:#e9e8eb"></div>
    <div class="t bl" style="left:81.3px;top:2.9px;font-size:7px;color:#626166">互动区</div>
    <svg class="bl" style="left:140.6px;top:1px" width="56" height="13" viewBox="829 137 56 13" fill="none" stroke="#5c5b60" stroke-width=".8" stroke-linecap="round" stroke-linejoin="round" transform="translate(0,-0.6)">
<path d="M832.200 143.600 Q832.200 140.200 835.400 140.200 Q837.400 140.200 838.200 141.800 M838.600 143 Q838.600 146.400 835.400 146.400 Q833.400 146.400 832.600 144.800 M838.400 139.800 V141.800 H836.400 M832.400 146.800 V144.800 H834.400"/>
<path d="M846.400 139.800 H852.600 M847.600 139.800 V143.200 M851.400 139.800 V143.200 M845.800 143.400 H853.200 M849.500 143.400 V147.200"/>
<rect x="860.400" y="139.600" width="6.400" height="7.200"/><path d="M864 141.400 V145"/>
<path d="M874.600 140.200 L880.600 146.600 M880.600 140.200 L874.600 146.600"/></svg>
    <div style="left:191.6px;top:16px;width:6px;height:396px;background:#e6e5e8"></div>
    <div style="left:191.6px;top:361px;width:6px;height:17px;background:#b6b5b9"></div>
    <div class="t bl" style="left:192.1px;top:19.5px;font-size:4px;color:#8a898d">▲</div>
    <div class="t bl" style="left:192.1px;top:381px;font-size:4px;color:#8a898d">▼</div>
    <div class="ci bl" style="left:116.7px;top:133.4px"></div>
    <div style="left:129.5px;top:127.9px;width:40px;height:18.200px;background:#d5d4d8;border-radius:2.500px"></div>
    <div class="t bl" style="left:134.6px;top:133.5px;font-size:7.200px;color:#5a595e">牟真民</div>
    <div class="t bl" style="left:76.8px;top:156.4px;font-size:8.700px;color:#444348;font-weight:500;letter-spacing:-.1px">讨论区(105)</div>
    <div class="av bl" style="top:172.3px"><svg width="17.400" height="17.400" viewBox="0 0 17.400 17.400"><rect width="17.400" height="17.400" fill="#4e2a24"/><path d="M0 9 Q4 8 7 11 L9 17.400 H0 Z" fill="#d6cbb2"/><circle cx="9.400" cy="8" r="3.800" fill="#d8b39a"/><path d="M3 6 Q8 -1 15.500 4 L14 8.500 Q10 3.500 5 8.500 Z" fill="#3a1a18"/><path d="M11 8 Q15 7 17.400 9.500 V14 Q13 15 11 12 Z" fill="#c23a40"/><path d="M8 14 Q12 12.500 16 14.500 L14 17.400 H9 Z" fill="#2f6a4c"/><circle cx="13" cy="5" r="1.600" fill="#b9a08a"/></svg></div>
    <div class="t cn bl" style="top:174.6px">骷头</div>
    <div class="cb" style="left:30.0px;top:184.8px;width:78.9px;height:17.6px"></div>
    <div class="cx bl" style="top:188.0px">老师k大报了哪一门呀</div>
    <div class="ci bl" style="left:112.6px;top:189.6px"></div>
    <div class="av bl" style="top:211.3px"><svg width="17.400" height="17.400" viewBox="0 0 17.400 17.400"><rect width="17.400" height="17.400" fill="#4e2a24"/><path d="M0 9 Q4 8 7 11 L9 17.400 H0 Z" fill="#d6cbb2"/><circle cx="9.400" cy="8" r="3.800" fill="#d8b39a"/><path d="M3 6 Q8 -1 15.500 4 L14 8.500 Q10 3.500 5 8.500 Z" fill="#3a1a18"/><path d="M11 8 Q15 7 17.400 9.500 V14 Q13 15 11 12 Z" fill="#c23a40"/><path d="M8 14 Q12 12.500 16 14.500 L14 17.400 H9 Z" fill="#2f6a4c"/><circle cx="13" cy="5" r="1.600" fill="#b9a08a"/></svg></div>
    <div class="t cn bl" style="top:213.5px">骷头</div>
    <div class="cb" style="left:30.0px;top:224.6px;width:97.6px;height:16.7px"></div>
    <div class="cx bl" style="top:227.1px">老师是从高中开始画画的吗</div>
    <div class="ci bl" style="left:131.4px;top:228.4px"></div>
    <div class="av bl" style="top:250.3px"><svg width="17.400" height="17.400" viewBox="0 0 17.400 17.400"><rect width="17.400" height="17.400" fill="#4e2a24"/><path d="M0 9 Q4 8 7 11 L9 17.400 H0 Z" fill="#d6cbb2"/><circle cx="9.400" cy="8" r="3.800" fill="#d8b39a"/><path d="M3 6 Q8 -1 15.500 4 L14 8.500 Q10 3.500 5 8.500 Z" fill="#3a1a18"/><path d="M11 8 Q15 7 17.400 9.500 V14 Q13 15 11 12 Z" fill="#c23a40"/><path d="M8 14 Q12 12.500 16 14.500 L14 17.400 H9 Z" fill="#2f6a4c"/><circle cx="13" cy="5" r="1.600" fill="#b9a08a"/></svg></div>
    <div class="t cn bl" style="top:252.0px">骷头</div>
    <div class="cb" style="left:30.0px;top:262.4px;width:126.8px;height:28.9px"></div>
    <div class="cx bl" style="top:265.7px">哈哈可能小时候朋友们也喜欢看你的</div>
    <div class="cx bl" style="top:276.9px">画</div>
    <div class="ci bl" style="left:160.8px;top:272.2px"></div>
    <div class="av bl" style="top:299.6px"><svg width="17.400" height="17.400" viewBox="0 0 17.400 17.400"><rect width="17.400" height="17.400" fill="#2a3048"/><path d="M0 0 H17.400 V4.500 Q9 6.500 0 5 Z" fill="#a8683c"/><path d="M0 11.500 Q8 10 17.400 12 V14 H0 Z" fill="#6a6a50"/><path d="M0 13.500 Q9 12.500 17.400 14 V17.400 H0 Z" fill="#ddd9d3"/><path d="M5 8.600 H12.500" stroke="#aab2c4" stroke-width="1.200"/></svg></div>
    <div class="t cn bl" style="top:300.6px;font-size:6.800px">Evak。</div>
    <div class="cb" style="left:30.0px;top:311.4px;width:126.8px;height:29.0px"></div>
    <div class="cx bl" style="top:314.9px">集训的时候我也觉得我很有天</div>
    <div class="cx bl" style="top:325.7px">赋。。。校考教我做人</div>
    <div class="ci bl" style="left:160.8px;top:321.3px"></div>
    <div class="av bl" style="top:346.8px"><svg width="17.400" height="17.400" viewBox="0 0 17.400 17.400"><rect width="17.400" height="17.400" fill="#e9e6ea"/><path d="M2 10 Q3 2 9 2.500 Q15 3 15 10 Q12 5.500 9 6 Q5 6 2 10 Z" fill="#f0b6c6"/><circle cx="9" cy="10.500" r="4" fill="#f4efef"/><path d="M1 14 L5 11" stroke="#b5a0a8" stroke-width=".8"/></svg></div>
    <div class="t cn bl" style="top:350.9px">阿水</div>
    <div class="cb" style="left:30.0px;top:361.0px;width:29.4px;height:17.7px"></div>
    <div class="cx bl" style="top:364.4px">好可爱</div>
    <div class="ci bl" style="left:64.3px;top:365.5px"></div>
    <div style="left:0;top:387.6px;width:200px;height:25px;background:#ecebee"></div>
    <div class="t bl" style="left:14.6px;top:396.6px;font-size:6.800px;color:#9d9ca1">说点什么吧~</div>
    <div class="bl" style="left:127.1px;top:397px;width:6px;height:6px;border-radius:50%;border:.8px solid #c6c5c9"></div>
    <div class="t bl" style="left:135.6px;top:397px;font-size:6px;color:#aaa9ae">问</div>
    <svg class="bl" style="left:154.2px;top:393.8px" width="13" height="13" viewBox="0 0 13 13" fill="none" stroke="#55545a" stroke-width=".9" stroke-linecap="round"><circle cx="6.400" cy="6.400" r="5.400"/><path d="M4 7.600 Q6.400 10 8.800 7.600"/><circle cx="4.600" cy="5" r=".5" fill="#55545a"/><circle cx="8.200" cy="5" r=".5" fill="#55545a"/></svg>
    <div class="t bl" style="left:173.2px;top:395.6px;font-size:8.600px;color:#2a6fe0">发送</div>
  </div>
  <div id="status"></div>
  
  <div style="left:31px;top:549.500px;width:130px;height:8.500px;background:#4a494c"></div>
  <div class="t st bl" style="left:34.500px">150%</div>
  <svg class="bl" style="left:48px;top:549.500px" width="840" height="9" viewBox="48 549.500 840 9" fill="none" stroke="#cfcfd1" stroke-width=".9" stroke-linecap="round" stroke-linejoin="round">
    <path d="M61.800 552.800 L63.600 554.800 L65.400 552.800"/>
    <path d="M74.400 551.600 V556 M78.400 551.600 L75.600 553.800 L78.400 556 Z" fill="#cfcfd1"/>
    <path d="M86.600 552 L84.400 553.800 L86.600 555.600 Z" fill="#cfcfd1"/>
    <path d="M115.400 552.800 L117.200 554.800 L119 552.800"/>
    <path d="M127 552 L129.200 553.800 L127 555.600 Z" fill="#7c7b7e" stroke="#7c7b7e"/>
    <path d="M136 552 L138.200 553.800 L136 555.600 Z M139.400 551.600 V556" fill="#7c7b7e" stroke="#7c7b7e"/>
    <path d="M255.600 551.600 L259.400 553.800 L255.600 556 Z" fill="#cfcfd1"/>
    <path d="M265.600 552.400 L264 553.800 L265.600 555.200 Z" fill="#8c8b8e" stroke="#8c8b8e"/>
  </svg>
  <div class="t st bl" style="left:92.500px">2</div>
  <div class="t st bl" style="left:193px;color:#b5b5b7">选择</div>
  <div style="left:567.500px;top:550.500px;width:13px;height:6px;background:#6a696c"></div>
  <div style="left:748px;top:549.500px;width:1px;height:8.500px;background:#3a393c"></div>
  <div style="left:764px;top:549.500px;width:1px;height:8.500px;background:#3a393c"></div>
  <div style="left:835px;top:549px;width:50px;height:9px;background:#7b7a7d"></div>
  <div class="t bl" style="left:849px;top:550.200px;font-size:6.600px;color:#2f2e31">拼 微软拼音</div>

  <div id="taskbar"></div>
  
  <svg class="bl" style="left:0;top:558px" width="885" height="25" viewBox="0 558 885 25">
    <defs>
      <linearGradient id="edg" x1="0" y1="0" x2="1" y2="1"><stop offset="0" stop-color="#36c6c0"/><stop offset="1" stop-color="#1566c8"/></linearGradient>
      <radialGradient id="ffg" cx="50%" cy="60%" r="60%"><stop offset="0" stop-color="#ffcf3a"/><stop offset=".6" stop-color="#ff7a2a"/><stop offset="1" stop-color="#e0304e"/></radialGradient>
    </defs>
    <!-- weather -->
    <circle cx="7.600" cy="566.600" r="3.200" fill="#f6b62a"/>
    <path d="M2 574.600 Q-.6 574.400 0 571.800 Q1 569.600 3.600 570.200 Q5 567.600 8 568.400 Q10.600 569.200 10.800 571.400 Q13.600 571.400 13.600 573.400 Q13.400 574.800 11.600 574.600 Z" fill="#dfe8f6" stroke="#8fb2e4" stroke-width=".7"/>
    <!-- windows -->
    <g fill="#2d93e4"><rect x="238.200" y="564.200" width="5.800" height="5.800" rx=".4"/><rect x="244.800" y="564.200" width="5.800" height="5.800" rx=".4"/><rect x="238.200" y="570.800" width="5.800" height="5.800" rx=".4"/><rect x="244.800" y="570.800" width="5.800" height="5.800" rx=".4"/></g>
    <!-- search pill -->
    <rect x="259.200" y="562.600" width="115" height="15.400" rx="7.700" fill="#e6efef"/>
    <circle cx="267.200" cy="569.600" r="2.700" fill="none" stroke="#2b2b2f" stroke-width="1"/><path d="M269.200 571.800 L271.400 574.200" stroke="#2b2b2f" stroke-width="1.100" stroke-linecap="round"/>
    <path d="M347 568.400 Q346.400 565.200 349.600 564.800 Q351.600 562.800 354.600 564 Q358 563.600 358.600 566.400 Q360.800 568 358.800 570 Q356.600 571.400 354.400 570.400 Q350.600 571.600 347 568.400 Z" fill="#6b9a2f"/>
    <path d="M353.200 570 L354.600 570 L355.200 575.800 L352.600 575.800 Z" fill="#7a5a34"/>
    <path d="M362 564.600 Q366 562.600 371 564.400 L372.200 574.600 Q367 576.600 362.400 575 Z" fill="#b58452"/>
    <path d="M364 566 Q366 570 364.600 574.400" stroke="#8e6238" stroke-width=".8" fill="none"/>
    <!-- task view -->
    <rect x="382.400" y="564.600" width="9" height="9" fill="#e9eeee"/><rect x="381" y="567" width="9" height="8.600" fill="#2a2a2e"/><rect x="384.200" y="564.800" width="7" height="6.600" fill="#d9dede"/><rect x="383.600" y="567" width="3.400" height="4.400" fill="#2a2a2e"/>
    <!-- firefox -->
    <circle cx="410.600" cy="570.400" r="6" fill="url(#ffg)"/><circle cx="410.200" cy="570.800" r="3" fill="#8a3fd0"/>
    <path d="M405 568 Q407 563.800 411.600 564.400 Q408.600 566 409 568.400" fill="#ff9a2a"/>
    <!-- chrome -->
    <g id="chr"><circle cx="434" cy="570.400" r="6.200" fill="#e23a2e"/><path d="M434 570.400 L428.600 567.400 A6.200 6.200 0 0 0 434.600 576.600 Z" fill="#2da94f"/><path d="M434 570.400 L434.600 576.600 A6.200 6.200 0 0 0 439.800 568 Z" fill="#f9bb2d"/><circle cx="434" cy="570.400" r="3" fill="#f4f6f6"/><circle cx="434" cy="570.400" r="2.300" fill="#3b78e7"/></g>
    <!-- edge -->
    <circle cx="457.400" cy="570.400" r="6.200" fill="url(#edg)"/><path d="M453.600 571.600 Q454.400 567.800 458 568 Q461.200 568.400 461 571 Q459.600 572.400 457.200 571.600 Q457.600 574.600 461.400 574" fill="none" stroke="#e9f7f7" stroke-width="1.400" stroke-linecap="round"/>
    <!-- folder -->
    <path d="M474.600 565.200 H479.400 L480.800 566.600 H487 V575.600 H474.600 Z" fill="#f3b63a"/><rect x="474.600" y="568.400" width="12.400" height="7.400" rx=".6" fill="#f7cb54"/><rect x="476.600" y="572" width="8.400" height="3.800" fill="#3f8fe0"/>
    <rect x="479.400" y="580.200" width="3" height="1" rx=".5" fill="#7d8a8a"/>
    <!-- white circle app -->
    <circle cx="504" cy="570.200" r="6.400" fill="#f3f6f8"/>
    <path d="M500.800 568 V572.600 H507.200 V568 M504 568 V572.600" stroke="#4a8fd8" stroke-width="1" fill="none"/>
    <!-- WPS -->
    <path d="M520.800 566 L523.200 574.800 L525.600 569.200 L527.400 574.800 L529.800 569.200 L531.200 574.800 L533.600 566 Z" fill="#e0242c"/>
    <path d="M523.600 567.600 L525.400 567.600 L527.400 572 L529.400 567.600 L531 567.600" stroke="#f6dede" stroke-width=".7" fill="none"/>
    <rect x="525.800" y="580.200" width="3" height="1" rx=".5" fill="#7d8a8a"/>
    <!-- yellow circle -->
    <circle cx="550.800" cy="570.400" r="6.300" fill="#f2cf27"/><path d="M549 566.600 Q553.400 567 552 570 Q549.400 572 551 575" stroke="#3aa048" stroke-width="2" fill="none" stroke-linecap="round"/>
    <rect x="549.200" y="580.200" width="3" height="1" rx=".5" fill="#7d8a8a"/>
    <!-- chrome 2 -->
    <circle cx="574" cy="570.400" r="6.200" fill="#e23a2e"/><path d="M574 570.400 L568.600 567.400 A6.200 6.200 0 0 0 574.600 576.600 Z" fill="#2da94f"/><path d="M574 570.400 L574.600 576.600 A6.200 6.200 0 0 0 579.800 568 Z" fill="#f9bb2d"/><circle cx="574" cy="570.400" r="3" fill="#f4f6f6"/><circle cx="574" cy="570.400" r="2.300" fill="#3b78e7"/>
    <rect x="572.400" y="580.200" width="3" height="1" rx=".5" fill="#7d8a8a"/>
    <!-- Ai -->
    <rect x="590.800" y="564" width="12.800" height="12.400" rx="1.600" fill="#3a1c04"/>
    <rect x="595.600" y="580.200" width="3" height="1" rx=".5" fill="#7d8a8a"/>
    <!-- blue app -->
    <rect x="614.800" y="564" width="12.400" height="12.600" rx="3" fill="#2a6fe0"/>
    <path d="M617.400 567.600 H621 L622 568.800 H624.800 V573.400 H617.400 Z" fill="#dfeafc"/><rect x="619" y="570.600" width="4.400" height="2.800" fill="#2a6fe0"/>
    <rect x="619.600" y="580.200" width="3" height="1" rx=".5" fill="#7d8a8a"/>
    <!-- active doc -->
    <rect x="636" y="560.800" width="17.600" height="20.600" rx="2" fill="#dcebeb"/>
    <rect x="639.400" y="564.200" width="11" height="12" fill="#f3f5f6" stroke="#9aa4a8" stroke-width=".6"/>
    <rect x="642.200" y="565.800" width="5.200" height="8" fill="#2a7ad8"/>
    <rect x="640" y="579.800" width="9.400" height="1.400" rx=".7" fill="#2a8f8a"/>
    <!-- tray -->
    <path d="M735.200 572 L738.200 569 L741.200 572" stroke="#2d2d31" stroke-width="1.100" fill="none" stroke-linecap="round" stroke-linejoin="round"/>
    <path d="M750.800 567.200 L758.600 569.400 L755.600 571 L757.600 574.200 L756 575 L754.200 571.800 L752 574 Z" fill="none" stroke="#1f9a94" stroke-width="1"/>
    <path d="M768 573.800 V569.800 L771.800 567.400 L775.600 569.800 V573.800 Z M768 571 L775.600 573.600 M769.600 569 L775.600 571.400" fill="none" stroke="#3a3a3e" stroke-width=".9"/>
    <rect x="787.200" y="566" width="3.600" height="6" rx="1.800" fill="none" stroke="#3a3a3e" stroke-width=".9"/><path d="M785.800 570.600 Q785.800 573.600 789 573.600 Q792.200 573.600 792.200 570.600 M789 573.600 V575.400" fill="none" stroke="#3a3a3e" stroke-width=".9"/>
    <path d="M803.400 569.600 Q807 566.400 810.600 569.600 M804.800 571.400 Q807 569.600 809.200 571.400" fill="none" stroke="#2d2d31" stroke-width=".9" stroke-linecap="round"/><circle cx="807" cy="573.200" r=".9" fill="#2d2d31"/>
    <path d="M816.800 569.600 H818.400 L820.600 567.600 V574.400 L818.400 572.400 H816.800 Z" fill="none" stroke="#2d2d31" stroke-width=".8" stroke-linejoin="round"/><path d="M822 569.600 Q823 571 822 572.400" fill="none" stroke="#2d2d31" stroke-width=".8"/>
    <path d="M828.200 568.800 Q829.200 567.400 831 567.800 L835.600 568.400 Q836.800 568.800 836.800 570 V572.600 Q836.800 573.800 835.600 573.800 H829.400 Q828.200 573.800 828.200 572.600 Z" fill="#2d2d31"/>
    <path d="M877.400 573.200 Q878.400 572.200 878.400 569.800 Q878.400 567.200 880.600 567.200 Q882.800 567.200 882.800 569.800 Q882.800 572.200 883.800 573.200 Z" fill="#2a6466"/><circle cx="880.600" cy="574.400" r=".9" fill="#2a6466"/>
  </svg>
  <div class="t bl" style="left:17.400px;top:562.600px;font-size:6.600px;color:#2b2b2f">14°C</div>
  <div class="t bl" style="left:17.400px;top:571px;font-size:6.200px;color:#6a7272">多云</div>
  <div class="t bl" style="left:278.200px;top:566px;font-size:7.200px;color:#4a4f50">搜索</div>
  <div class="t bl" style="left:593px;top:566.400px;font-size:7.400px;font-weight:700;color:#f29a2e;letter-spacing:-.3px">Ai</div>
  <div class="t bl" style="left:858.600px;top:561.400px;font-size:6.400px;color:#2b2b2f">22:37</div>
  <div class="t bl" style="left:845px;top:570.400px;font-size:6.400px;color:#2b2b2f">2024/3/23</div>

</div>

</div>
<div id="bottom">
  
  <div class="tm" style="left:11px;top:3.600px">02:37:31</div>
  <div id="pbar"></div><div id="pfill"></div><div id="pknob"></div>
  <div class="tm" style="left:830.600px;top:3.600px">02:43:24</div>
  <svg style="left:19px;top:40px" width="20" height="22" viewBox="0 0 20 22"><path d="M3.300 3.200 L15.700 10.900 L3.300 18.700 Z" fill="#fff" stroke="#fff" stroke-width="2.600" stroke-linejoin="round"/></svg>
  <svg style="left:62px;top:41px" width="20" height="20" viewBox="0 0 20 20"><path d="M3.400 2.800 V15.800" stroke="#fff" stroke-width="3" stroke-linecap="round" fill="none"/><path d="M16.200 3 V15.600 L8.200 9.300 Z" fill="#fff" stroke="#fff" stroke-width="2.200" stroke-linejoin="round"/></svg>
  <svg style="left:101px;top:41px" width="20" height="20" viewBox="0 0 20 20"><path d="M16.400 2.800 V15.800" stroke="#fff" stroke-width="3" stroke-linecap="round" fill="none"/><path d="M3.600 3 V15.600 L11.600 9.300 Z" fill="#fff" stroke="#fff" stroke-width="2.200" stroke-linejoin="round"/></svg>
  <div class="cl" style="left:512px">倍速</div>
  <div class="cl" style="left:565px">超清</div>
  <div class="cl" style="left:617px">字幕</div>
  <div class="cl" style="left:669.500px">查找</div>
  <div class="cl" style="left:721px">选集</div>
  <div id="swp">SWP</div>
  <svg style="left:771px;top:40px" width="22" height="22" viewBox="0 0 22 22" fill="none" stroke="#fff" stroke-width="2.500" stroke-linejoin="round"><path d="M7.500 4.300 H15.300 L19.200 11.100 L15.300 17.900 H7.500 L3.600 11.100 Z"/><circle cx="11.400" cy="11.100" r="3.100" stroke-width="2.300"/></svg>
  <svg style="left:815px;top:39px" width="24" height="24" viewBox="0 0 24 24" fill="none" stroke="#fff" stroke-width="2.300" stroke-linejoin="round" stroke-linecap="round"><path d="M3.400 9.300 H6.800 L12.900 4.600 V19.400 L6.800 14.700 H3.400 Z"/><path d="M15.800 8.200 Q18.600 12 15.800 15.800"/><path d="M17.600 4.800 Q23 12 17.600 19.200"/></svg>
  <svg style="left:861px;top:41.500px" width="18" height="18" viewBox="0 0 18 18" fill="none" stroke="#fff" stroke-width="2.400" stroke-linecap="round" stroke-linejoin="round"><path d="M2.900 6.200 V4 Q2.900 2.800 4.100 2.800 H6.300 M11.900 2.800 H14.100 Q15.300 2.800 15.300 4 V6.200 M15.300 10.900 V13.100 Q15.300 14.300 14.100 14.300 H11.900 M6.300 14.300 H4.100 Q2.900 14.300 2.900 13.100 V10.900"/></svg>

</div>

<div id="float">
  <svg style="left:12px;top:13px" width="28" height="22" viewBox="0 0 28 22" fill="none" stroke-linecap="round" stroke-linejoin="round">
    <defs><linearGradient id="aig" x1="0" y1="0" x2="1" y2="1"><stop offset="0" stop-color="#5fd8ff"/><stop offset=".5" stop-color="#6f8bff"/><stop offset="1" stop-color="#a45cff"/></linearGradient></defs>
    <path d="M9 18.600 H5.400 Q3.200 18.600 3.200 16.400 V5.400 Q3.200 3.200 5.400 3.200 H13.600 Q15.800 3.200 15.800 5.400 V7.600 L21.400 3.800 V10" stroke="url(#aig)" stroke-width="2.200"/>
    <circle cx="8" cy="8.200" r="1.400" fill="#6fd0ff"/>
    <path d="M11.800 18.800 L15 11.600 L18.200 18.800 M13 16.400 H17 M21.400 11.800 V18.800" stroke="#a668ff" stroke-width="2"/>
  </svg>
  <div class="fl" style="top:40px">AI看</div>
  <svg style="left:14px;top:65px" width="26" height="22" viewBox="862.800 298.500 26 22" fill="none" stroke="#fff" stroke-width="1.900" stroke-linejoin="round" stroke-linecap="round"><rect x="865" y="301.200" width="16.200" height="16.800" rx="3"/><path d="M866 313 H877.300 V302"/></svg>
  <div class="fl" style="top:91px">课件</div>
  <div style="left:0;top:114.300px;width:40px;height:1px;background:#4a4a4a"></div>
  <svg style="left:19px;top:124px" width="10" height="16" viewBox="0 0 10 16" fill="none" stroke="#fff" stroke-width="1.900" stroke-linecap="round" stroke-linejoin="round"><path d="M7 3 L2.800 7.800 L7 12.600"/></svg>
  <div class="fl" style="top:144px">展开</div>
</div>

</body>
</html>
